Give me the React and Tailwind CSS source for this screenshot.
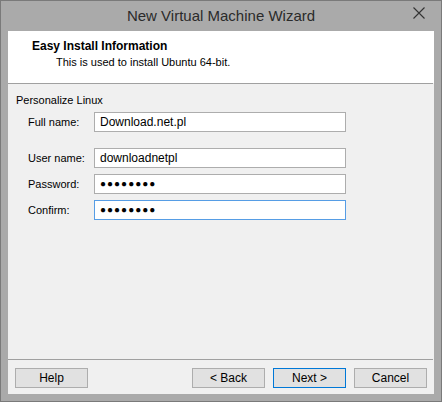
import React from 'react';

const font = { fontFamily: '"Segoe UI", "Liberation Sans", Arial, sans-serif' };

function Field({ label, value, focused, secret }) {
  return (
    <div className="flex items-center h-[20px]">
      <span className="w-[66px] text-[11px] text-black">{label}</span>
      <div
        className={`w-[252px] h-[20px] flex items-center pl-[5px] bg-white border ${
          focused ? 'border-[#569de5]' : 'border-[#adadad]'
        }`}
      >
        {secret ? (
          <span className="text-[10px] tracking-[1px] text-black leading-none">●●●●●●●●</span>
        ) : (
          <span className="text-[12px] text-black leading-none">{value}</span>
        )}
      </div>
    </div>
  );
}

function Btn({ children, primary }) {
  return (
    <button
      className={`w-[73px] h-[20px] text-[12px] text-black bg-[#e1e1e1] border ${
        primary ? 'border-[#0078d7]' : 'border-[#adadad]'
      } flex items-center justify-center leading-none`}
    >
      {children}
    </button>
  );
}

export default function App() {
  return (
    <div style={font} className="w-[442px] h-[402px] bg-[#aaaaaa] border border-[#7a7a7a] flex flex-col">
      {/* Title bar */}
      <div className="h-[30px] flex items-center justify-center relative">
        <span className="text-[15px] text-[#2b2b2b]">New Virtual Machine Wizard</span>
        <svg className="absolute right-[16px] top-[6px]" width="12" height="12" viewBox="0 0 12 12">
          <path d="M0.5 0.5 L11.5 11.5 M11.5 0.5 L0.5 11.5" stroke="#333" strokeWidth="1.1" fill="none" />
        </svg>
      </div>

      {/* Client area */}
      <div className="mx-[7px] mb-[7px] flex-1 flex flex-col bg-[#f0f0f0]">
        {/* Header */}
        <div className="h-[52px] bg-white flex flex-col pt-[7px] pl-[24px]">
          <span className="text-[12px] font-bold text-black leading-[16px]">Easy Install Information</span>
          <span className="text-[11px] text-black leading-[16px] pl-[24px]">This is used to install Ubuntu 64-bit.</span>
        </div>
        <div className="h-px bg-[#a0a0a0] mr-px" />

        {/* Body */}
        <div className="h-[275px] pt-[8px] pl-[8px]">
          <div className="text-[11px] text-black leading-[16px]">Personalize Linux</div>
          <div className="pl-[12px] mt-[4px] flex flex-col">
            <Field label="Full name:" value="Download.net.pl" />
            <div className="flex flex-col gap-[6px] mt-[16px]">
              <Field label="User name:" value="downloadnetpl" />
              <Field label="Password:" secret />
              <Field label="Confirm:" secret focused />
            </div>
          </div>
        </div>
        <div className="h-px bg-[#a0a0a0] mr-px" />

        {/* Buttons */}
        <div className="flex items-start pt-[8px] pl-[7px]">
          <Btn>Help</Btn>
          <div className="ml-[104px] flex gap-[8px]">
            <Btn>&lt; Back</Btn>
            <Btn primary>Next &gt;</Btn>
            <Btn>Cancel</Btn>
          </div>
        </div>
      </div>
    </div>
  );
}
